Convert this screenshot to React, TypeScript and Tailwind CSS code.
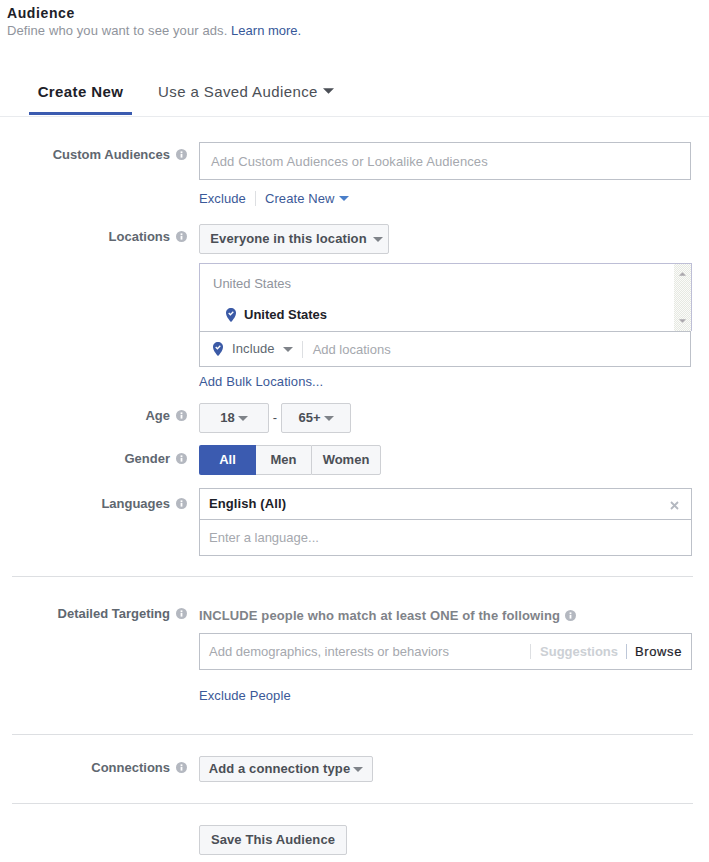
import React from 'react'

function InfoIcon() {
  return (
    <svg width="11" height="11" viewBox="0 0 11 11" className="shrink-0">
      <circle cx="5.5" cy="5.5" r="5.5" fill="#b4b8c0" />
      <rect x="4.6" y="4.8" width="1.8" height="3.8" fill="#fff" />
      <rect x="4.6" y="2.4" width="1.8" height="1.6" fill="#fff" />
    </svg>
  )
}

function Caret({ color = '#7f8389', className = '' }: { color?: string; className?: string }) {
  return (
    <svg width="10" height="5" viewBox="0 0 10 5" className={className}>
      <path d="M0 0h10L5 5z" fill={color} />
    </svg>
  )
}

function Pin() {
  return (
    <svg width="10" height="14" viewBox="0 0 10 14" className="shrink-0">
      <path d="M5 0C2.200 0 0 2.100 0 4.800 0 8.300 3 12 5 14c2-2 5-5.700 5-9.200C10 2.100 7.800 0 5 0z" fill="#3b5aa6" />
      <path d="M2.700 5l1.700 1.800 2.900-3" fill="none" stroke="#fff" strokeWidth="1.300" />
    </svg>
  )
}

function Row({ label, top, children, className = '' }: { label: string; top: string; children: React.ReactNode; className?: string }) {
  return (
    <div className={`flex ${className}`}>
      <div className={`w-[199px] shrink-0 flex justify-end items-center gap-[6px] pr-[12px] h-[14px] ${top}`}>
        <span className="text-[13px] font-bold text-[#606770] leading-none">{label}</span>
        <InfoIcon />
      </div>
      <div className="flex-1 min-w-0">{children}</div>
    </div>
  )
}

function GrayButton({ children, className = '' }: { children: React.ReactNode; className?: string }) {
  return (
    <div className={`flex items-center justify-center border border-[#ced0d4] rounded-[2px] bg-[#f6f7f9] text-[13px] font-bold text-[#4b4f56] ${className}`}>
      {children}
    </div>
  )
}

export default function App() {
  return (
    <div className="w-[709px] h-[862px] overflow-hidden bg-white text-[13px] font-['Liberation_Sans',Arial,sans-serif]">
      <div className="pl-[7px] pt-[6px]">
        <h1 className="text-[14px] font-bold leading-[14px] text-[#1d2129] tracking-[0.6px]">Audience</h1>
        <p className="mt-[2px] text-[13px] leading-[17px] text-[#90949c] tracking-[0.1px]">
          Define who you want to see your ads. <span className="text-[#365899] tracking-normal">Learn more.</span>
        </p>
      </div>

      <div className="mt-[32px] h-[46px] flex items-start border-b border-[#e9ebee] pl-[29px]">
        <div className="w-[103px] h-[44px] pt-[12px] text-center text-[15px] font-bold leading-[18px] text-[#1d2129] border-b-[3px] border-[#3b5bb0] tracking-[0.4px]">
          Create New
        </div>
        <div className="ml-[26px] pt-[12px] flex items-center text-[15px] leading-[18px] text-[#4b4f56] tracking-[0.4px]">
          Use a Saved Audience
          <Caret color="#4b4f56" className="ml-[5px] w-[11px] h-[6px] -mt-[2px]" />
        </div>
      </div>

      <Row label="Custom Audiences" top="mt-[5px]" className="mt-[25px]">
        <div className="w-[492px] h-[38px] border border-[#bdc1c9] flex items-center pl-[11px] pt-[1px] text-[#a5a8ae] tracking-[0.1px]">
          Add Custom Audiences or Lookalike Audiences
        </div>
        <div className="mt-[9px] h-[18px] flex items-center text-[#3b5998] leading-none">
          <span className="tracking-[0.1px]">Exclude</span>
          <span className="ml-[9px] w-px h-[15px] bg-[#dddfe2]" />
          <span className="ml-[9px] tracking-[0.1px]">Create New</span>
          <Caret color="#4a7fc9" className="ml-[4px]" />
        </div>
      </Row>

      <Row label="Locations" top="mt-[5px]" className="mt-[17px]">
        <GrayButton className="w-[190px] h-[30px] pl-[5px] tracking-[0.1px]">
          Everyone in this location
          <Caret className="ml-[6px]" />
        </GrayButton>
        <div className="mt-[9px] w-[493px] h-[68px] border border-[#bdbed6] border-b-0 flex">
          <div className="flex-1">
            <div className="pl-[13px] pt-[12px] leading-[15px] text-[#90949c]">United States</div>
            <div className="pl-[26px] mt-[16px] flex items-center gap-[8px] font-bold text-[#1d2129] leading-[15px]">
              <Pin />
              United States
            </div>
          </div>
          <div className="w-[17px] h-full bg-[repeating-conic-gradient(#e6e9e2_0_25%,#fbfbf9_0_50%)] bg-[length:2px_2px] flex flex-col items-center justify-between pt-[8px] pb-[8px]">
            <Caret color="#aaa7ac" className="rotate-180 w-[7px] h-[4px]" />
            <Caret color="#aaa7ac" className="w-[7px] h-[4px]" />
          </div>
        </div>
        <div className="w-[492px] h-[36px] border border-[#bdc1c9] flex items-center pl-[13px]">
          <Pin />
          <span className="ml-[9px] text-[#606770] tracking-[0.1px]">Include</span>
          <Caret className="ml-[8px]" />
          <span className="ml-[9px] w-px h-[17px] bg-[#dddfe2]" />
          <span className="ml-[10px] pt-[1px] text-[#a5a8ae]">Add locations</span>
        </div>
        <div className="mt-[7px] leading-[15px] text-[#3b5998] tracking-[0.1px]">Add Bulk Locations...</div>
      </Row>

      <Row label="Age" top="mt-[5px]" className="mt-[14px]">
        <div className="flex items-center">
          <GrayButton className="w-[70px] h-[30px]">
            18
            <Caret className="ml-[3px]" />
          </GrayButton>
          <span className="w-[12px] text-center text-[#4b4f56]">-</span>
          <GrayButton className="w-[70px] h-[30px]">
            65+
            <Caret className="ml-[3px]" />
          </GrayButton>
        </div>
      </Row>

      <Row label="Gender" top="mt-[6px]" className="mt-[12px]">
        <div className="flex h-[30px] w-[182px] text-[13px] font-bold">
          <div className="w-[57px] flex items-center justify-center bg-[#3b5bb0] text-white rounded-l-[2px]">All</div>
          <div className="w-[55px] flex items-center justify-center bg-[#f6f7f9] border-y border-[#ced0d4] text-[#4b4f56]">Men</div>
          <div className="w-[70px] flex items-center justify-center bg-[#f6f7f9] border border-[#ced0d4] rounded-r-[2px] text-[#4b4f56]">Women</div>
        </div>
      </Row>

      <Row label="Languages" top="mt-[8px]" className="mt-[13px]">
        <div className="w-[493px] h-[68px] border border-[#bdc1c9]">
          <div className="h-[31px] border-b border-[#bdc1c9] flex items-center justify-between pl-[9px] pr-[12px]">
            <span className="font-bold text-[#1d2129] tracking-[0.1px]">English (All)</span>
            <svg width="9" height="9" viewBox="0 0 9 9" className="mt-[3px]">
              <path d="M1 1l7 7M8 1L1 8" stroke="#b4b8c0" strokeWidth="1.800" />
            </svg>
          </div>
          <div className="h-[35px] flex items-center pl-[9px] text-[#a5a8ae]">Enter a language...</div>
        </div>
      </Row>

      <div className="mt-[20px] mx-[12px] w-[681px] h-px bg-[#dddfe2]" />

      <Row label="Detailed Targeting" top="mt-[29px]">
        <div className="mt-[31px] flex items-center gap-[5px] h-[14px] font-bold text-[#7f8389] tracking-[0.12px] leading-none">
          INCLUDE people who match at least ONE of the following
          <InfoIcon />
        </div>
        <div className="mt-[11px] w-[493px] h-[37px] border border-[#bdc1c9] flex items-center pl-[9px]">
          <span className="flex-1 text-[#a5a8ae]">Add demographics, interests or behaviors</span>
          <span className="w-px h-[15px] bg-[#dddfe2]" />
          <span className="ml-[9px] font-bold text-[#ccd0d5]">Suggestions</span>
          <span className="ml-[8px] w-px h-[15px] bg-[#bdc7d8]" />
          <span className="ml-[8px] mr-[9px] text-[#1d2129] tracking-[0.6px] [-webkit-text-stroke:0.2px_#1d2129]">Browse</span>
        </div>
        <div className="mt-[18px] leading-[15px] text-[#3b5998] tracking-[0.1px]">Exclude People</div>
      </Row>

      <div className="mt-[31px] mx-[12px] w-[681px] h-px bg-[#dddfe2]" />

      <Row label="Connections" top="mt-[25px]">
        <GrayButton className="mt-[21px] w-[174px] h-[26px] tracking-[0.1px]">
          Add a connection type
          <Caret className="ml-[3px]" />
        </GrayButton>
      </Row>

      <div className="mt-[21px] mx-[12px] w-[681px] h-px bg-[#dddfe2]" />

      <div className="mt-[21px] pl-[199px]">
        <GrayButton className="w-[148px] h-[30px] tracking-[0.1px]">Save This Audience</GrayButton>
      </div>
    </div>
  )
}
